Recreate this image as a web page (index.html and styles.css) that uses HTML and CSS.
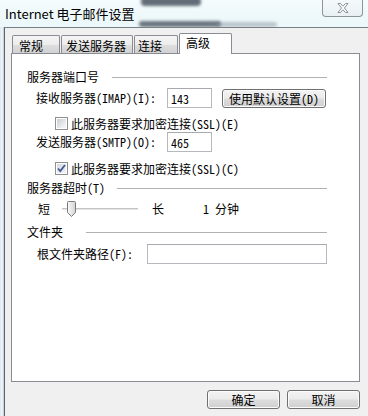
FILE: index.html
```html
<!DOCTYPE html>
<html lang="zh-CN">
<head>
<meta charset="utf-8">
<title>Internet 电子邮件设置</title>
<link rel="stylesheet" href="styles.css">
</head>
<body>
<div class="window">
  <div class="titlebar">
    <span class="glass glass-1"></span>
    <span class="glass glass-2"></span>
    <span class="glass glass-3"></span>
    <span class="title">Internet 电子邮件设置</span>
    <div class="close">
      <svg width="12" height="10" viewBox="0 0 12 10"><path d="M1 0.5 H3.5 L6 3.2 L8.5 0.5 H11 L7.4 5 L11 9.5 H8.5 L6 6.8 L3.5 9.5 H1 L4.6 5 Z" fill="#fbfdfe" stroke="#7f8790" stroke-width="0.9" stroke-linejoin="round"/></svg>
    </div>
  </div>
  <div class="frame">
    <div class="edge"></div>
    <div class="dialog">
      <div class="tabs">
        <div class="tab t1">常规</div>
        <div class="tab t2">发送服务器</div>
        <div class="tab t3">连接</div>
        <div class="tab t4 active">高级</div>
      </div>
      <div class="panel">
        <div class="group-head g1"><span class="group-label">服务器端口号</span><span class="rule"></span></div>
        <div class="field-row row-imap">
          <span class="field-label">接收服务器(IMAP)(I):</span>
          <input class="input input-port" type="text" value="143">
          <button class="btn btn-default">使用默认设置(D)</button>
        </div>
        <div class="check-row row-ssl1">
          <span class="checkbox"></span>
          <span>此服务器要求加密连接(SSL)(E)</span>
        </div>
        <div class="field-row row-smtp">
          <span class="field-label">发送服务器(SMTP)(O):</span>
          <input class="input input-port" type="text" value="465">
        </div>
        <div class="check-row row-ssl2">
          <span class="checkbox checked"><svg width="11" height="11" viewBox="0 0 11 11"><path d="M2 5.5 L4.3 8 L9 2" fill="none" stroke="#3f5a94" stroke-width="1.8"/></svg></span>
          <span>此服务器要求加密连接(SSL)(C)</span>
        </div>
        <div class="group-head g2"><span class="group-label">服务器超时(T)</span><span class="rule"></span></div>
        <div class="slider-row">
          <span class="slider-end">短</span>
          <div class="track">
            <svg class="thumb" width="9" height="16" viewBox="0 0 9 16"><defs><linearGradient id="tg" x1="0" x2="1" y1="0" y2="0"><stop offset="0" stop-color="#fafafa"/><stop offset="1" stop-color="#d2d2d2"/></linearGradient></defs><path d="M0.5 1.5 Q0.5 0.5 1.5 0.5 H7.5 Q8.5 0.5 8.5 1.5 V11.5 L4.5 15.5 L0.5 11.5 Z" fill="url(#tg)" stroke="#7a7a7a"/></svg>
          </div>
          <span class="slider-end slider-long">长</span>
          <span class="slider-value">1 分钟</span>
        </div>
        <div class="group-head g3"><span class="group-label">文件夹</span><span class="rule"></span></div>
        <div class="field-row row-root">
          <span class="field-label root-label">根文件夹路径(F):</span>
          <input class="input input-path" type="text" value="">
        </div>
      </div>
      <div class="buttons">
        <button class="btn">确定</button>
        <button class="btn">取消</button>
      </div>
    </div>
  </div>
</div>
</body>
</html>
```
FILE: styles.css
```css
* { box-sizing: border-box; }
html, body { margin: 0; padding: 0; }
body {
  width: 368px;
  height: 416px;
  overflow: hidden;
  background: #f0f0f0;
  font-family: "Noto Sans Mono CJK SC", "Noto Sans CJK SC", monospace;
  font-size: 12px;
  line-height: 16px;
  color: #000;
}
.window { width: 368px; height: 416px; display: flex; flex-direction: column; }

.titlebar {
  position: relative;
  height: 27px;
  flex: none;
  display: flex;
  align-items: flex-start;
  background: linear-gradient(#f3fbfd, #ebf7fa);
  overflow: hidden;
}
.title {
  position: relative;
  z-index: 1;
  font-family: "Noto Sans CJK SC", sans-serif;
  font-size: 13px;
  line-height: 18px;
  padding: 5px 0 0 5px;
  color: #000;
}
.glass { position: absolute; border-radius: 4px; filter: blur(1.6px); }
.glass-1 { left: 141px; top: -3px; width: 60px; height: 9px; background: #4a5561; opacity: .85; }
.glass-2 { left: 139px; top: 21px; width: 82px; height: 6px; background: #4a5561; opacity: .8; }
.glass-3 { left: 215px; top: 22px; width: 62px; height: 5px; background: #7d8a95; opacity: .45; }
.close {
  position: relative;
  z-index: 1;
  margin-left: auto;
  margin-right: 5px;
  margin-top: -2px;
  width: 41px;
  height: 19px;
  border: 1px solid #8d949b;
  border-top: none;
  border-radius: 0 0 4px 4px;
  background: linear-gradient(#f6fafc, #e9f0f4);
  display: flex;
  align-items: center;
  justify-content: center;
  padding-top: 1px;
}

.frame { flex: 1; display: flex; }
.edge { width: 5px; background: linear-gradient(to right, #dce7ee, #f3f8fb 55%, #b7c5d0); }
.dialog {
  flex: 1;
  display: flex;
  flex-direction: column;
  border-left: 1px solid #5b6670;
  border-top: 1px solid #7a7f84;
}

.tabs { height: 25px; display: flex; align-items: flex-end; gap: 1px; padding-left: 7px; }
.tab {
  height: 18px;
  border: 1px solid #898c95;
  border-bottom: none;
  border-radius: 2px 2px 0 0;
  background: linear-gradient(#f5f5f5, #ececec 50%, #dedede 52%, #d2d2d2);
  padding-top: 2px;
  white-space: nowrap;
}
.tab.active {
  position: relative;
  z-index: 1;
  height: 21px;
  margin-bottom: -1px;
  background: #fff;
  padding-top: 1px;
}
.t1 { width: 48px; padding-left: 6px; }
.t2 { width: 72px; padding-left: 4px; }
.t3 { width: 44px; padding-left: 3px; }
.t4 { width: 53px; padding-left: 6px; }

.panel {
  height: 329px;
  margin: 0 8px 0 6px;
  border: 1px solid #898c95;
  background: #fff;
  padding: 15px 32px 0 15px;
}
.group-head { display: flex; align-items: center; height: 16px; }
.group-label { flex: none; white-space: nowrap; }
.g1 .group-label { width: 85px; }
.g2 { margin-top: 5px; }
.g2 .group-label { width: 90px; }
.g3 { margin-top: 6px; }
.g3 .group-label { width: 59px; }
.rule { flex: 1; height: 1px; background: #b1b1b1; }

.field-row { display: flex; align-items: center; height: 20px; margin-left: 9px; }
.row-imap { margin-top: 3px; }
.row-smtp { margin-top: 2px; }
.row-root { margin-top: 4px; margin-left: 10px; }
.field-label { flex: none; width: 131px; white-space: nowrap; }
.root-label { width: 110px; }
.input {
  flex: none;
  height: 20px;
  border: 1px solid #b5b8bd;
  border-top-color: #a6a9ae;
  background: #fff;
  padding: 0 0 0 3px;
  margin: 0;
  font: inherit;
  line-height: 18px;
  color: #000;
  outline: none;
}
.input-port { width: 45px; }
.input-path { width: 180px; }

.btn {
  flex: none;
  width: 73px;
  height: 19px;
  margin: 0;
  padding: 0;
  border: 1px solid #707070;
  border-radius: 3px;
  background: linear-gradient(#f3f3f3, #ebebeb 48%, #dddddd 52%, #cfcfcf);
  box-shadow: inset 0 0 0 1px #fbfbfb;
  font: inherit;
  line-height: 17px;
  text-align: center;
  color: #000;
  white-space: nowrap;
}
.btn-default { width: 104px; margin-left: 10px; }

.check-row { display: flex; align-items: center; gap: 3px; height: 13px; margin-left: 28px; white-space: nowrap; }
.row-ssl1 { margin-top: 9px; }
.row-ssl2 { margin-top: 10px; }
.checkbox {
  flex: none;
  width: 13px;
  height: 13px;
  border: 1px solid #8e8f8f;
  background: linear-gradient(135deg, #c3c7cd, #eef0f2 70%, #f6f6f6);
  box-shadow: inset 0 0 0 1px #fff;
  display: flex;
  align-items: center;
  justify-content: center;
}
.checkbox.checked { background: linear-gradient(135deg, #d3d8df, #f4f5f7); }

.slider-row { display: flex; align-items: center; height: 18px; margin-top: 4px; margin-left: 11px; }
.slider-end { flex: none; width: 12px; }
.track {
  flex: none;
  width: 76px;
  height: 18px;
  margin-left: 12px;
  display: flex;
  align-items: center;
  background: linear-gradient(to bottom, transparent 8px, #c4c4c4 8px, #c4c4c4 9px, #e4e4e4 9px, #e4e4e4 10px, transparent 10px);
}
.thumb { display: block; margin-left: 5px; }
.slider-long { margin-left: 14px; }
.slider-value { margin-left: 39px; white-space: pre; }

.buttons { display: flex; justify-content: flex-end; gap: 7px; padding-right: 8px; margin-top: 8px; }
```
